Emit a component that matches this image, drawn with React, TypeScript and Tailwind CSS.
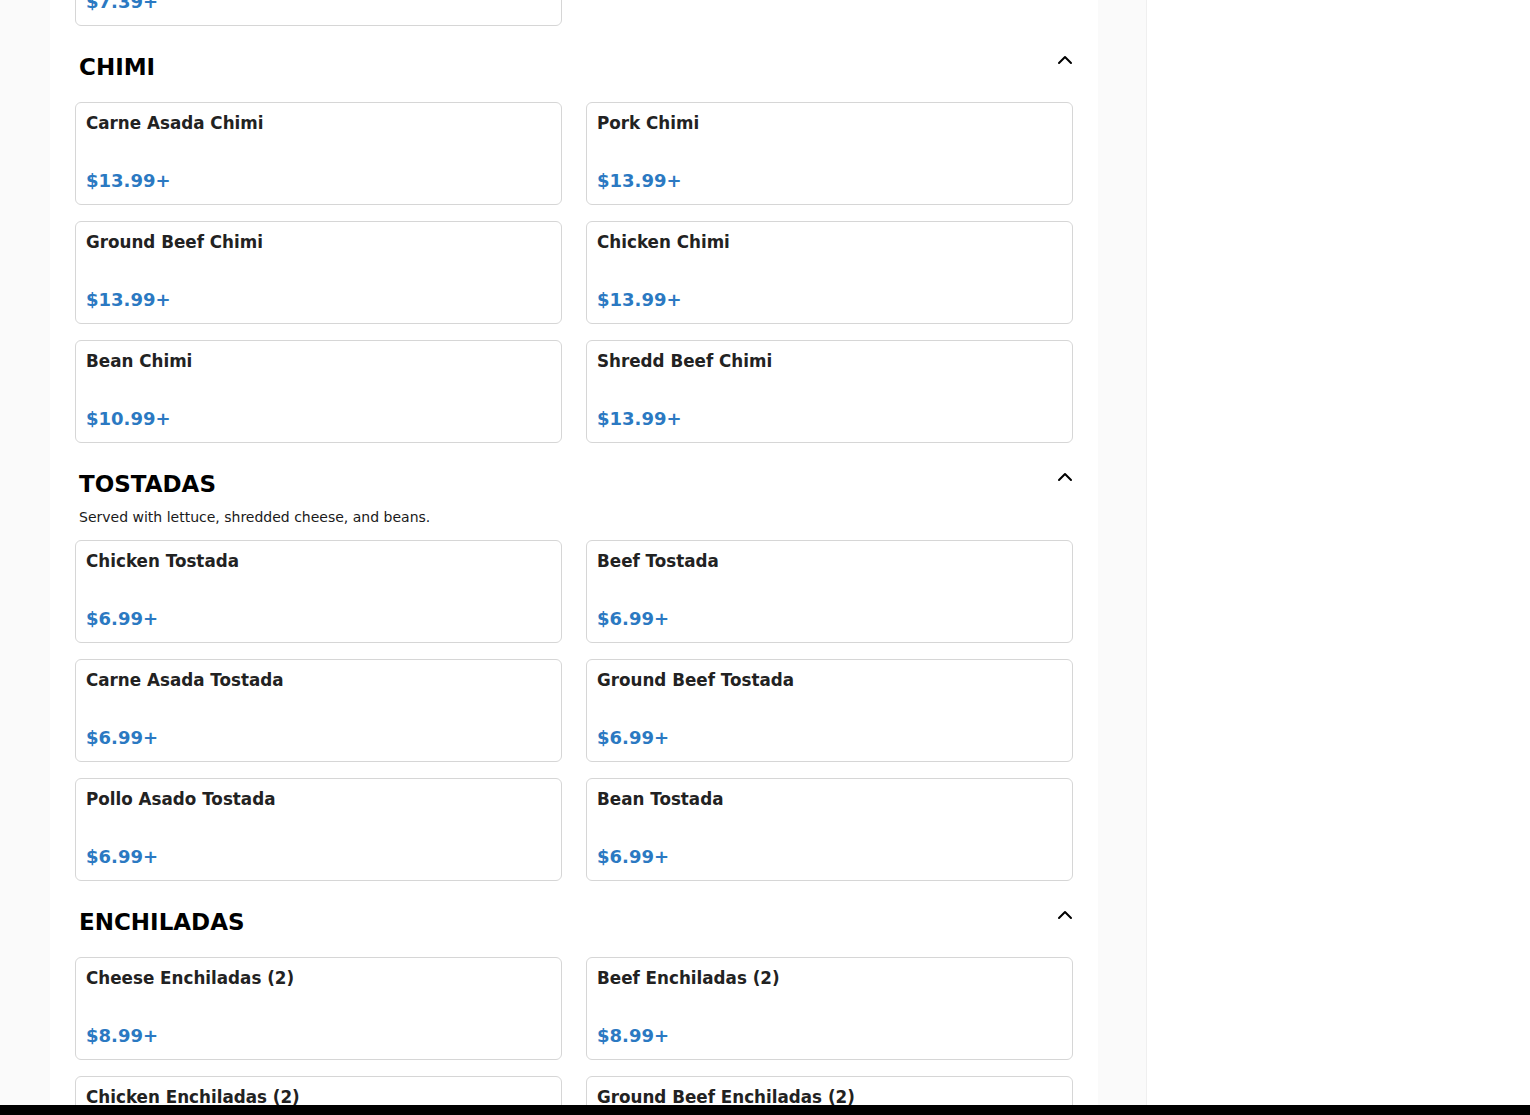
import { ChevronUp } from 'lucide-react';

type Item = { name: string; price: string };
type Section = { title: string; description?: string; items: Item[] };

const sections: Section[] = [
  {
    title: 'CHIMI',
    items: [
      { name: 'Carne Asada Chimi', price: '$13.99+' },
      { name: 'Pork Chimi', price: '$13.99+' },
      { name: 'Ground Beef Chimi', price: '$13.99+' },
      { name: 'Chicken Chimi', price: '$13.99+' },
      { name: 'Bean Chimi', price: '$10.99+' },
      { name: 'Shredd Beef Chimi', price: '$13.99+' },
    ],
  },
  {
    title: 'TOSTADAS',
    description: 'Served with lettuce, shredded cheese, and beans.',
    items: [
      { name: 'Chicken Tostada', price: '$6.99+' },
      { name: 'Beef Tostada', price: '$6.99+' },
      { name: 'Carne Asada Tostada', price: '$6.99+' },
      { name: 'Ground Beef Tostada', price: '$6.99+' },
      { name: 'Pollo Asado Tostada', price: '$6.99+' },
      { name: 'Bean Tostada', price: '$6.99+' },
    ],
  },
  {
    title: 'ENCHILADAS',
    items: [
      { name: 'Cheese Enchiladas (2)', price: '$8.99+' },
      { name: 'Beef Enchiladas (2)', price: '$8.99+' },
      { name: 'Chicken Enchiladas (2)', price: '$8.99+' },
      { name: 'Ground Beef Enchiladas (2)', price: '$8.99+' },
    ],
  },
];

function ItemCard({ item }: { item: Item }) {
  return (
    <div className="flex h-[103px] flex-col justify-between rounded-md border border-[#d6d6d6] bg-white px-[10px] pt-[8px] pb-[11px]">
      <div className="text-[16.75px] font-bold leading-6 text-[#222]">{item.name}</div>
      <div className="text-[18px] font-bold leading-6 text-[#2b79c2]">{item.price}</div>
    </div>
  );
}

function MenuSection({ section }: { section: Section }) {
  return (
    <section className="pt-[25px]">
      <div className="flex items-start justify-between pl-1">
        <h2 className="text-[23px] font-bold leading-8 text-black">{section.title}</h2>
        <ChevronUp size={24} strokeWidth={2} className="-mr-[4px] -mt-[3px] text-black" />
      </div>
      {section.description && (
        <p className="mt-[7px] pl-1 text-[14px] leading-5 text-[#1a1a1a]">{section.description}</p>
      )}
      <div className={`grid grid-cols-2 gap-x-6 gap-y-4 ${section.description ? 'mt-[13px]' : 'mt-[19px]'}`}>
        {section.items.map((item) => (
          <ItemCard key={item.name} item={item} />
        ))}
      </div>
    </section>
  );
}

export default function App() {
  return (
    <div className="flex h-[1115px] flex-col overflow-hidden bg-[#fafafa] font-['DejaVu_Sans',sans-serif]">
      <div className="flex min-h-0 flex-1">
        <div className="w-[50px] shrink-0" />
        <main className="w-[1048px] shrink-0 overflow-hidden bg-white">
          <div className="-mt-[77px] px-[25px]">
            {/* tail of the previous category */}
            <div className="grid grid-cols-2 gap-x-6">
              <ItemCard item={{ name: 'Cheese Quesadilla', price: '$7.39+' }} />
            </div>
            {sections.map((s) => (
              <MenuSection key={s.title} section={s} />
            ))}
          </div>
        </main>
        <div className="w-[49px] shrink-0 border-r border-[#efefef]" />
        <aside className="flex-1 bg-white" />
      </div>
      <div className="h-[10px] shrink-0 bg-black" />
    </div>
  );
}
